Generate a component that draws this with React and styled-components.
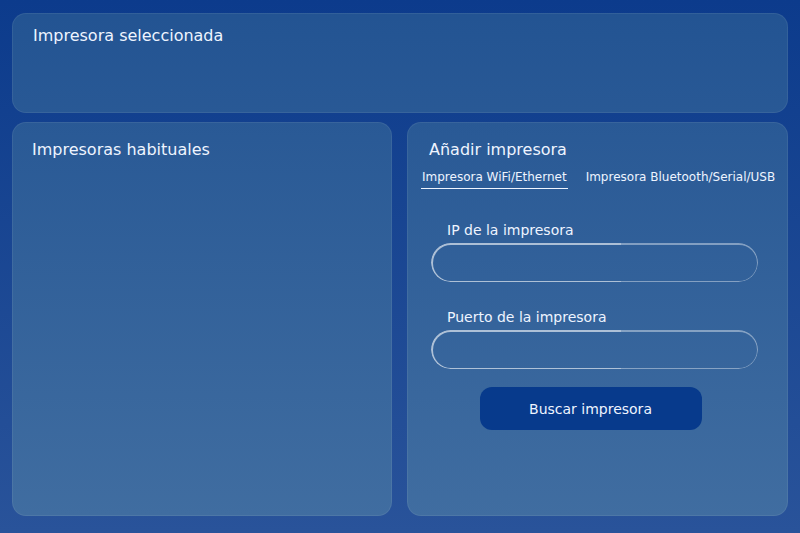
import React, { useState } from 'react';
import styled, { createGlobalStyle } from 'styled-components';

const GlobalStyle = createGlobalStyle`
    * { box-sizing: border-box; }
    html, body { margin: 0; height: 100%; }
    body {
        font-family: "DejaVu Sans", "Noto Sans", sans-serif;
        background: linear-gradient(180deg, #0c3b8c 0%, #29539a 100%);
        color: #eef4ff;
    }
    #root { height: 100%; }
`;

const Page = styled.div`
    height: 100%;
    padding: 13px 13px 17px 12px;
    display: grid;
    grid-template-rows: 100px 1fr;
    row-gap: 9px;
`;

const Card = styled.section`
    border-radius: 14px;
    border: 1px solid rgba(255, 255, 255, 0.07);
    background: linear-gradient(180deg, #225392 0%, #416ea1 100%) fixed;
    padding: ${({ $pad }) => $pad || '12px 20px'};
    display: flex;
    flex-direction: column;
    min-width: 0;
`;

const Bottom = styled.div`
    display: grid;
    grid-template-columns: 380px 381px;
    column-gap: 15px;
`;

const Title = styled.h2`
    margin: 0;
    font-size: 16px;
    font-weight: 400;
    line-height: 20px;
    padding-left: ${({ $indent }) => $indent || '0'};
`;

const Tabs = styled.div`
    display: flex;
    gap: 17px;
    margin-top: 10px;
    margin-left: -1px;
`;

const Tab = styled.button`
    flex-shrink: 0;
    white-space: nowrap;
    background: none;
    border: none;
    padding: 0 1px 3px;
    font-family: inherit;
    font-size: 12px;
    line-height: 15px;
    color: #eef4ff;
    cursor: pointer;
    border-bottom: 1px solid ${({ $active }) => ($active ? '#eef4ff' : 'transparent')};
`;

const Form = styled.form`
    display: flex;
    flex-direction: column;
    margin: 32px 15px 0 9px;
`;

const Field = styled.label`
    display: flex;
    flex-direction: column;
    margin-bottom: 26px;
`;

const LabelText = styled.span`
    font-size: 14px;
    line-height: 18px;
    padding-left: 16px;
    margin-bottom: 4px;
`;

const InputShell = styled.div`
    position: relative;
    height: 39px;

    &::before {
        content: '';
        position: absolute;
        inset: 0;
        border-radius: 20px;
        padding: 1.5px;
        background: linear-gradient(90deg, rgba(255, 255, 255, 0.6) 58%, rgba(255, 255, 255, 0.4) 58%);
        -webkit-mask: linear-gradient(#000 0 0) content-box, linear-gradient(#000 0 0);
        -webkit-mask-composite: xor;
        mask-composite: exclude;
        pointer-events: none;
    }
`;

const Input = styled.input`
    width: 100%;
    height: 100%;
    border-radius: 20px;
    border: none;
    background: transparent;
    color: #fff;
    font-family: inherit;
    font-size: 14px;
    padding: 0 18px;
    outline: none;
`;

const SubmitButton = styled.button`
    align-self: center;
    width: 222px;
    height: 43px;
    margin-top: -8px;
    margin-left: -8px;
    border: none;
    border-radius: 12px;
    background: #073a8c;
    color: #eef4ff;
    font-family: inherit;
    font-size: 14px;
    cursor: pointer;
`;

function App() {
    const [tab, setTab] = useState('wifi');
    const [ip, setIp] = useState('');
    const [port, setPort] = useState('');

    return (
        <>
            <GlobalStyle />
            <Page>
                <Card>
                    <Title>Impresora seleccionada</Title>
                </Card>
                <Bottom>
                    <Card $pad="17px 19px">
                        <Title>Impresoras habituales</Title>
                    </Card>
                    <Card $pad="17px 14px">
                        <Title $indent="7px">Añadir impresora</Title>
                        <Tabs>
                            <Tab type="button" $active={tab === 'wifi'} onClick={() => setTab('wifi')}>
                                Impresora WiFi/Ethernet
                            </Tab>
                            <Tab type="button" $active={tab === 'bt'} onClick={() => setTab('bt')}>
                                Impresora Bluetooth/Serial/USB
                            </Tab>
                        </Tabs>
                        <Form onSubmit={(e) => e.preventDefault()}>
                            <Field>
                                <LabelText>IP de la impresora</LabelText>
                                <InputShell>
                                    <Input value={ip} onChange={(e) => setIp(e.target.value)} />
                                </InputShell>
                            </Field>
                            <Field>
                                <LabelText>Puerto de la impresora</LabelText>
                                <InputShell>
                                    <Input value={port} onChange={(e) => setPort(e.target.value)} />
                                </InputShell>
                            </Field>
                            <SubmitButton type="submit">Buscar impresora</SubmitButton>
                        </Form>
                    </Card>
                </Bottom>
            </Page>
        </>
    );
}

export default App;
